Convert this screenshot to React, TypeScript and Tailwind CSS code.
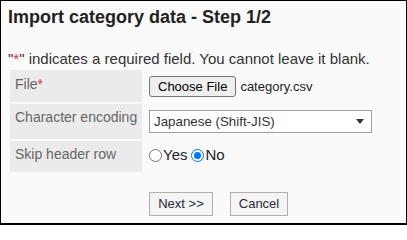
import React from 'react';

const font = { fontFamily: '"Liberation Sans", Arial, sans-serif' };

function Radio({ checked }: { checked?: boolean }) {
  return checked ? (
    <span className="inline-block h-[13px] w-[13px] rounded-full border border-[#0075ff] bg-white p-[2px]">
      <span className="block h-full w-full rounded-full bg-[#0075ff]" />
    </span>
  ) : (
    <span className="inline-block h-[13px] w-[13px] rounded-full border border-[#767676] bg-white" />
  );
}

export default function App() {
  return (
    <div
      style={font}
      className="h-[225px] w-[407px] overflow-hidden border border-b-2 border-black bg-[#fafafa] pl-[7px] text-[#333]"
    >
      <h1 className="mt-[5px] text-[18px] leading-[22px] font-bold text-[#222]">
        Import category data - Step 1/2
      </h1>

      <p className="mt-[22px] text-[15px] leading-[17px] whitespace-nowrap text-[#333]">
        "<span className="text-[#e0303a]">*</span>" indicates a required field. You cannot leave it blank.
      </p>

      <div className="mt-[3px] ml-[2px] grid grid-cols-[132px_1fr] gap-x-[2px] gap-y-[2px]">
        {/* File */}
        <div className="h-[32px] bg-[#ebebeb] pt-[6px] pl-[5px] text-[14px] leading-[16px] whitespace-nowrap text-[#666]">
          File<span className="text-[#e0303a]">*</span>
        </div>
        <div className="flex h-[32px] items-start gap-[4px] pt-[6px] pl-[5px]">
          <button className="h-[21px] rounded-[3px] border border-[#767676] bg-[#efefef] px-[8px] text-[13px] leading-[17px] text-black">
            Choose File
          </button>
          <span className="text-[13px] leading-[21px] text-[#222]">category.csv</span>
        </div>

        {/* Character encoding */}
        <div className="h-[35px] bg-[#ebebeb] pt-[5px] pl-[5px] text-[14px] leading-[16px] whitespace-nowrap text-[#666]">
          Character encoding
        </div>
        <div className="h-[35px] pt-[6px] pl-[5px]">
          <div className="flex h-[23px] w-[223px] items-center justify-between border border-[#a0a0a0] bg-white pr-[7px] pl-[4px] text-[13.33px] text-[#333]">
            <span>Japanese (Shift-JIS)</span>
            <svg width="8" height="5" viewBox="0 0 8 5">
              <path d="M0 0h8L4 5z" fill="#333" />
            </svg>
          </div>
        </div>

        {/* Skip header row */}
        <div className="h-[31px] bg-[#ebebeb] pt-[5px] pl-[5px] text-[14px] leading-[16px] whitespace-nowrap text-[#666]">
          Skip header row
        </div>
        <div className="flex h-[31px] items-center pb-[2px] pl-[5px] text-[15px] text-[#222]">
          <Radio />
          <span className="ml-[1px]">Yes</span>
          <span className="ml-[4px] flex items-center">
            <Radio checked />
          </span>
          <span className="ml-[1px]">No</span>
        </div>
      </div>

      <div className="mt-[20px] ml-[141px] flex gap-[17px]">
        <button className="h-[24px] w-[64px] border border-[#b0b0b0] bg-[#f4f4f4] text-[13px] text-[#2a2a3a]">
          Next &gt;&gt;
        </button>
        <button className="h-[24px] w-[58px] border border-[#b0b0b0] bg-[#f4f4f4] text-[13px] text-[#2a2a3a]">
          Cancel
        </button>
      </div>
    </div>
  );
}
